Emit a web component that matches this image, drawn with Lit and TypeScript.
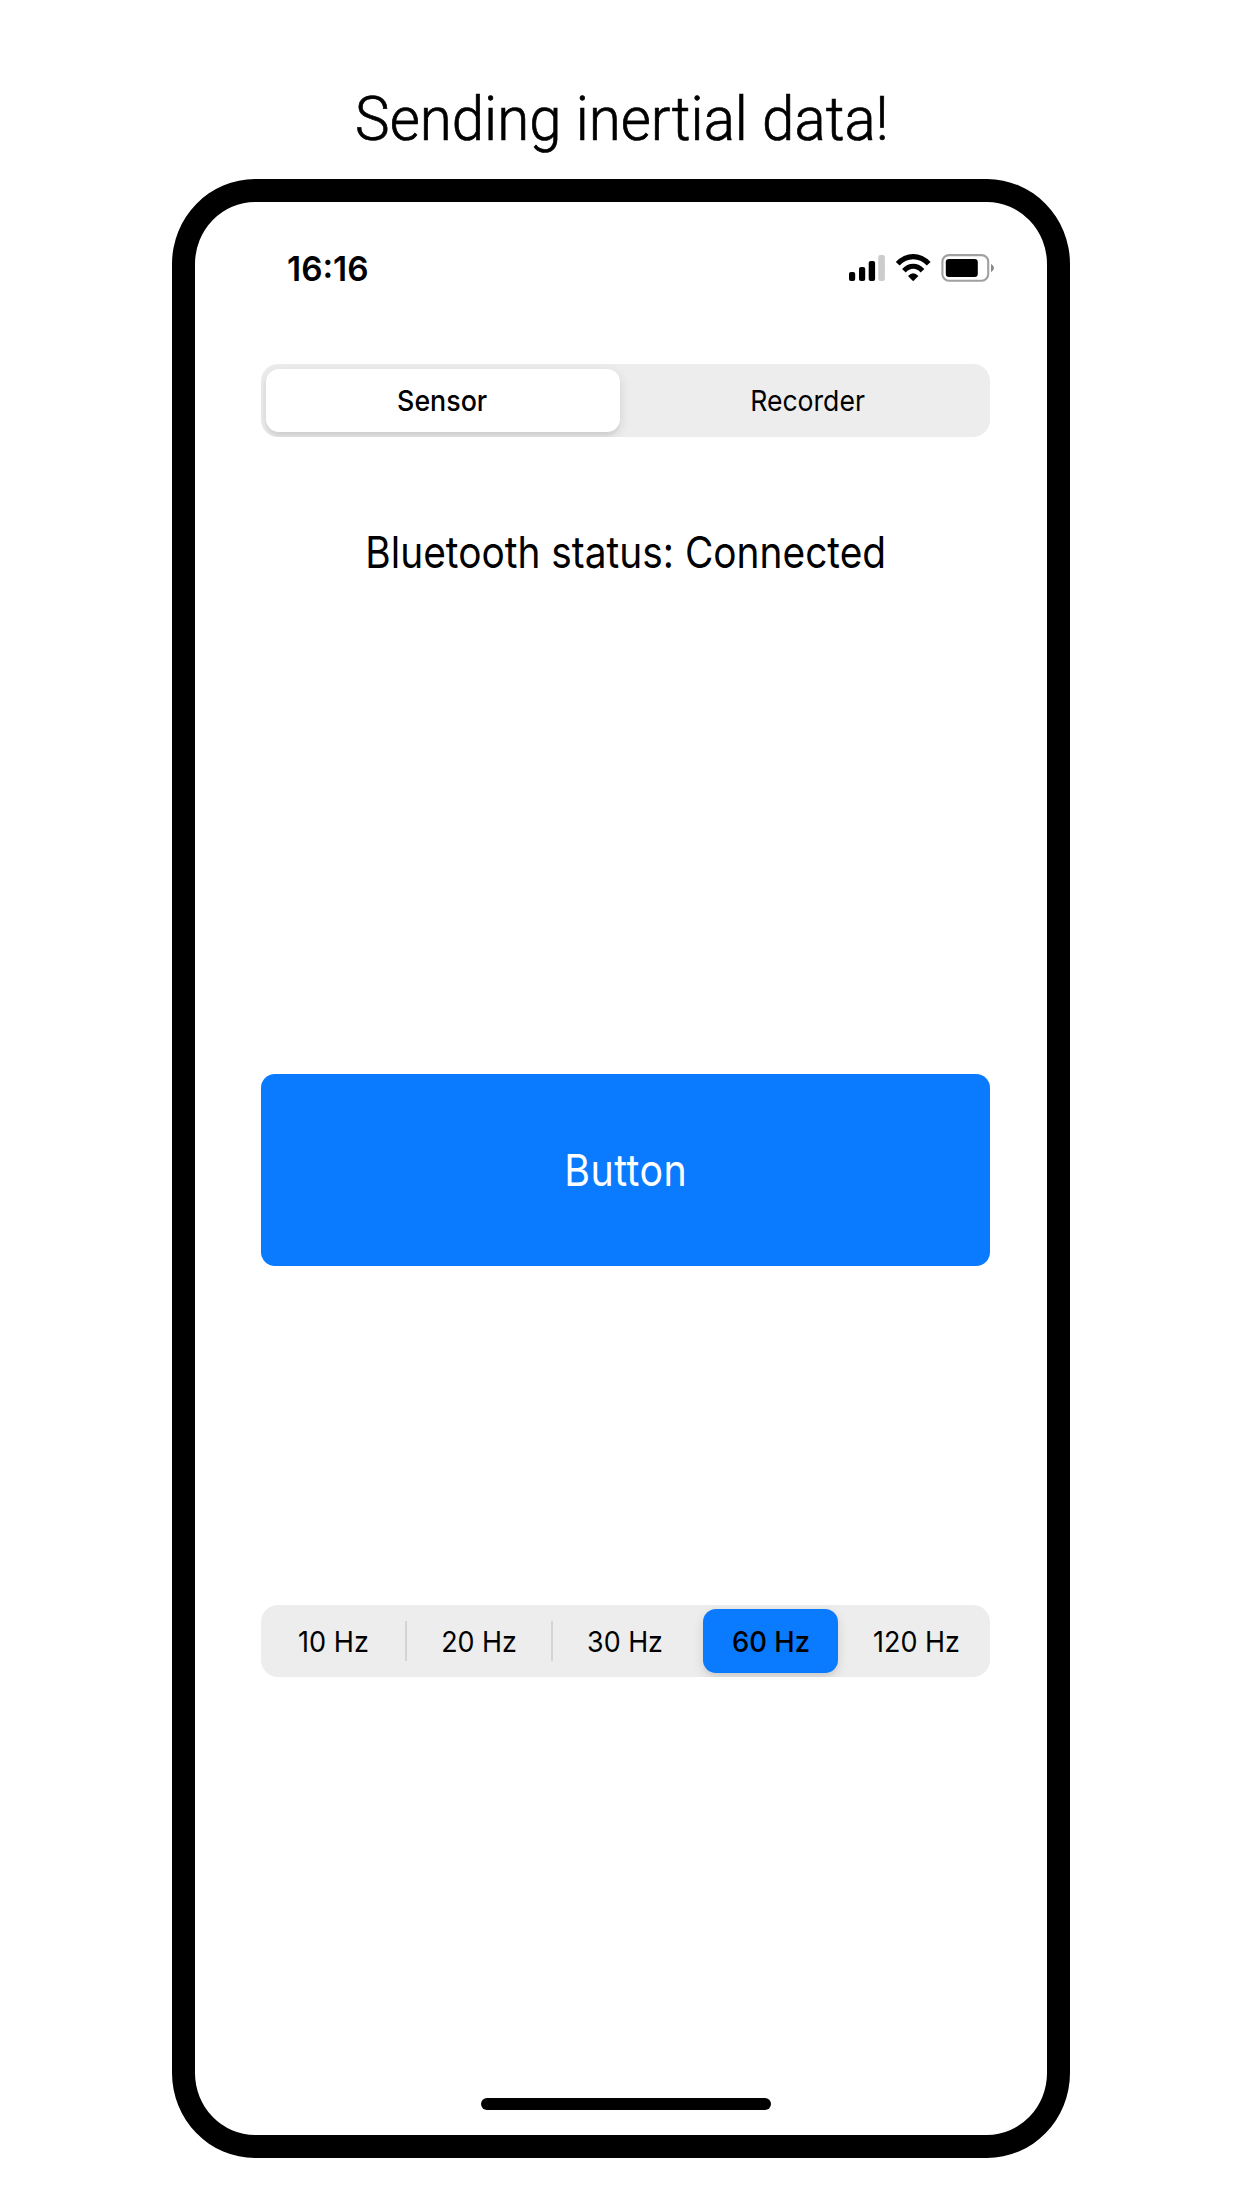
import { LitElement, html, css } from "lit";
import { customElement, property, state } from "lit/decorators.js";
import { classMap } from "lit/directives/class-map.js";
import { styleMap } from "lit/directives/style-map.js";

/** One line of text condensed horizontally so that its ink spans `width` pixels. */
@customElement("fit-text")
class FitText extends LitElement {
  static styles = css`
    :host { display: block; line-height: 1; white-space: nowrap; }
    .box { height: 1em; }
    .line { display: inline-block; transform-origin: 0 0; line-height: 1; vertical-align: top; }
  `;
  @property() text = "";
  @property({ type: Number }) width = 0;
  @state() private scale = 1;
  @state() private shift = 0;

  firstUpdated() {
    const cs = getComputedStyle(this);
    const ctx = document.createElement("canvas").getContext("2d")!;
    ctx.font = `${cs.fontWeight} ${cs.fontSize} ${cs.fontFamily}`;
    const spacing = parseFloat(cs.letterSpacing) || 0;
    const m = ctx.measureText(this.text);
    const ink = m.actualBoundingBoxLeft + m.actualBoundingBoxRight + spacing * (this.text.length - 1);
    this.scale = this.width / ink;
    this.shift = m.actualBoundingBoxLeft * this.scale;
  }

  render() {
    return html`<div class="box" style=${styleMap({ width: `${this.width}px` })}><span
      class="line"
      style=${styleMap({ transform: `translateX(${this.shift}px) scaleX(${this.scale})` })}
      >${this.text}</span></div>`;
  }
}

interface Segment { label: string; width: number; divider?: boolean }

@customElement("segmented-control")
class SegmentedControl extends LitElement {
  static styles = css`
    :host { display: block; }
    .track { height: 72.5px; border-radius: 17px; background: #ededed; overflow: hidden; }
    .cells { display: grid; grid-auto-flow: column; grid-auto-columns: 1fr; height: 100%; margin: 0 0 0 -1px; }
    .cells.pair { margin-right: -1px; }
    .cell {
      display: flex; align-items: stretch; padding: 4.5px 5.5px; box-sizing: border-box; color: #000;
      font: 430 29px Inter, "Liberation Sans", sans-serif;
    }
    .divider {
      flex: none; width: 2px; height: 40px; margin: 0 -6.5px 0 4.5px; align-self: center; background: #d4d4d4;
    }
    .pill { flex: 1; display: flex; align-items: center; justify-content: center; border-radius: 13px; }
    .on { background: #fff; font-weight: 540; box-shadow: 0 4px 12px rgba(0, 0, 0, 0.12), 0 4px 2px rgba(0, 0, 0, 0.03); }
    .blue { background: #0a7aff; }
  `;
  @property({ attribute: false }) items: Segment[] = [];
  @property({ type: Number }) selected = 0;
  @property({ type: Boolean }) accent = false;

  render() {
    return html`<div class="track"><div class=${classMap({ cells: true, pair: this.items.length === 2 })}>${this.items.map((it, i) => {
      const on = i === this.selected;
      return html`<div class="cell" @click=${() => (this.selected = i)}>
        <div class=${classMap({ pill: true, on, blue: on && this.accent })}>
          <fit-text .text=${it.label} .width=${it.width}></fit-text>
        </div>
        ${it.divider ? html`<div class="divider"></div>` : ""}
      </div>`;
    })}</div></div>`;
  }
}

@customElement("app-root")
class AppRoot extends LitElement {
  static styles = css`
    :host { display: block; font-family: Inter, "Liberation Sans", sans-serif; color: #000; }
    .page {
      width: 1242px; height: 2208px; box-sizing: border-box; background: #fff; overflow: hidden;
      display: flex; flex-direction: column; align-items: center; padding-top: 88px;
    }
    .title { font: 300 62px Roboto, "Liberation Sans", sans-serif; -webkit-text-stroke: 0.7px #000; }
    .phone {
      width: 898.8px; height: 1978.4px; margin-top: 29.3px; box-sizing: border-box; flex: none;
      border: 23px solid #000; border-radius: 83px / 85px;
      display: flex; flex-direction: column; padding: 49px 57.6px 0 66.6px;
    }
    .status {
      display: flex; justify-content: space-between; align-items: flex-start; height: 112.8px;
      padding: 0 0 0 26.4px; box-sizing: border-box;
    }
    .time { font-weight: 600; font-size: 34.5px; margin-top: 1px; }
    .icons { display: block; margin-right: -5px; }
    .bluetooth { align-self: center; margin-top: 93.5px; font-size: 44px; font-weight: 400; }
    .action {
      display: flex; align-items: center; justify-content: center; height: 192px; margin-top: 499.8px;
      border-radius: 14px; background: #0a7aff; color: #fff; font-size: 44px; letter-spacing: 0.5px; flex: none;
    }
    .rates { margin-top: 339px; }
    .home { width: 290px; height: 11.6px; border-radius: 6px; background: #000; align-self: center; margin: 420.7px 0 0 1px; flex: none; }
  `;

  private modes: Segment[] = [
    { label: "Sensor", width: 89 },
    { label: "Recorder", width: 113 },
  ];
  private rates: Segment[] = [
    { label: "10 Hz", width: 69, divider: true },
    { label: "20 Hz", width: 73, divider: true },
    { label: "30 Hz", width: 74 },
    { label: "60 Hz", width: 76 },
    { label: "120 Hz", width: 85 },
  ];

  render() {
    return html`<main class="page">
      <fit-text class="title" .text=${"Sending inertial data!"} .width=${528}></fit-text>
      <section class="phone">
        <div class="status">
          <fit-text class="time" .text=${"16:16"} .width=${79.5}></fit-text>
          <svg class="icons" width="148" height="36" viewBox="847 251 148 36">
            <rect x="849" y="272" width="6.2" height="9" rx="2" />
            <rect x="859" y="267" width="6.2" height="14" rx="2" />
            <rect x="868.7" y="261" width="6.4" height="20" rx="2" />
            <rect x="878.3" y="255" width="6.6" height="26" rx="2" fill="#ccc" />
            <g fill="none" stroke="#000">
              <path d="M897.7 263.8Q904.5 256.6 913.2 256.6T928.7 263.8" stroke-width="5.2" />
              <path d="M903.9 270.7Q908 266.3 913.2 266.3T922.5 270.7" stroke-width="5" />
            </g>
            <path d="M908 276Q913.2 270.6 918.4 276L914 280.6Q913.2 281.4 912.4 280.6Z" />
            <rect x="942.4" y="255.1" width="45.8" height="25.6" rx="6.5" fill="none" stroke="#a0a0a0" stroke-width="2.1" />
            <rect x="945.8" y="259" width="32" height="18" rx="3.2" />
            <path d="M991 264Q994 265.6 994 268T991 272.2Z" fill="#888" />
          </svg>
        </div>
        <segmented-control .items=${this.modes} .selected=${0}></segmented-control>
        <fit-text class="bluetooth" .text=${"Bluetooth status: Connected"} .width=${515.5}></fit-text>
        <div class="action"><fit-text .text=${"Button"} .width=${117}></fit-text></div>
        <segmented-control class="rates" .items=${this.rates} .selected=${3} .accent=${true}></segmented-control>
        <div class="home"></div>
      </section>
    </main>`;
  }
}
